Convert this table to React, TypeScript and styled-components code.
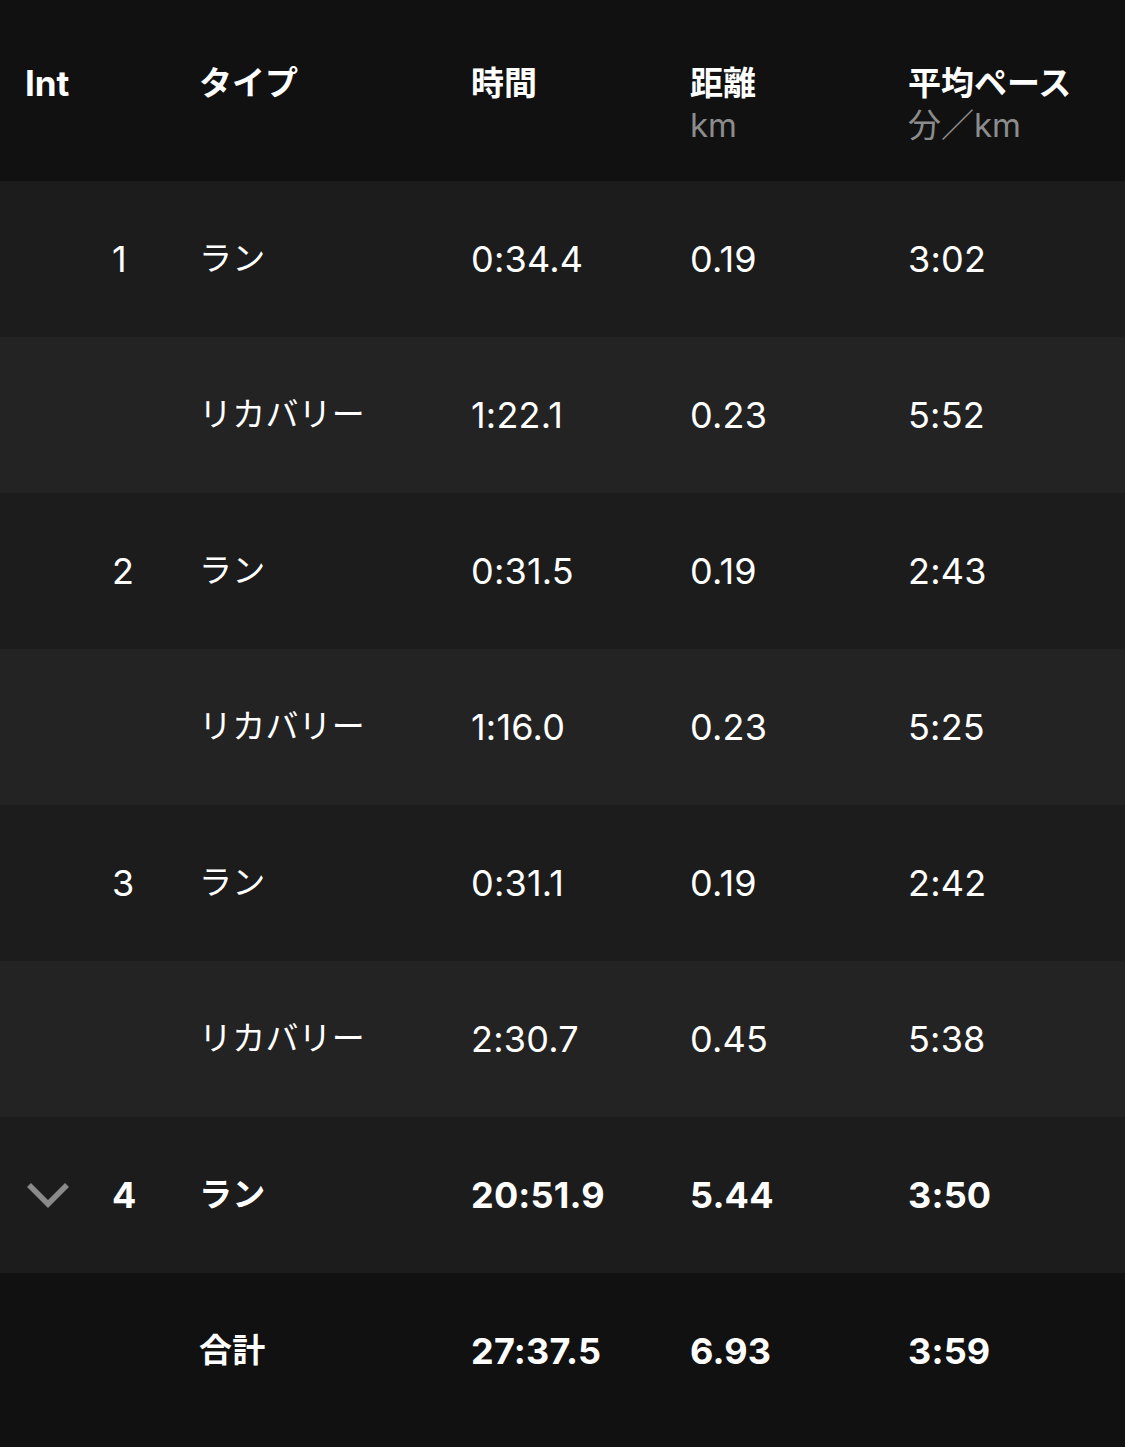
import { FC } from "react";
import styled, { createGlobalStyle } from "styled-components";

const GlobalStyle = createGlobalStyle`
    html, body {
        margin: 0;
        padding: 0;
        background: #111111;
    }
    body {
        font-family: Inter, "Noto Sans CJK JP", sans-serif;
        color: #ffffff;
    }
`;

const Table = styled.div`
    width: 1125px;
    display: flex;
    flex-direction: column;
`;

const Row = styled.div<{ $bg: string; $height: number }>`
    display: grid;
    grid-template-columns: 174px 272px 219px 218px 1fr;
    align-items: center;
    height: ${(p) => p.$height}px;
    padding-left: 25px;
    background: ${(p) => p.$bg};
`;

const HeaderRow = styled(Row)`
    align-items: start;
    padding-top: 62px;
    box-sizing: border-box;
`;

const HeadCell = styled.div`
    display: flex;
    flex-direction: column;
`;

const HeadTitle = styled.span<{ $jp?: boolean }>`
    font-size: ${(p) => (p.$jp ? 33 : 35)}px;
    font-weight: 700;
    line-height: 42px;
`;

const HeadUnit = styled.span`
    font-size: 33px;
    font-weight: 400;
    line-height: 42px;
    color: #8c8c8c;
`;

const IntCell = styled.div`
    display: flex;
    align-items: center;
    position: relative;
    padding-left: 87px;
`;

const Chevron = styled.svg`
    position: absolute;
    left: 1px;
    top: 50%;
    transform: translateY(-50%);
`;

const Cell = styled.div<{ $bold?: boolean; $jp?: boolean }>`
    font-size: ${(p) => (p.$jp ? 33 : 36)}px;
    font-weight: ${(p) => (p.$bold ? 700 : 400)};
    line-height: 44px;
    letter-spacing: 0.2px;
    white-space: nowrap;
    margin-top: ${(p) => (p.$jp ? -3 : 0)}px;
`;

type Lap = {
    int?: string;
    type: string;
    time: string;
    dist: string;
    pace: string;
    recovery?: boolean;
    bold?: boolean;
    expand?: boolean;
};

const LAPS: Lap[] = [
    { int: "1", type: "ラン", time: "0:34.4", dist: "0.19", pace: "3:02" },
    { type: "リカバリー", time: "1:22.1", dist: "0.23", pace: "5:52", recovery: true },
    { int: "2", type: "ラン", time: "0:31.5", dist: "0.19", pace: "2:43" },
    { type: "リカバリー", time: "1:16.0", dist: "0.23", pace: "5:25", recovery: true },
    { int: "3", type: "ラン", time: "0:31.1", dist: "0.19", pace: "2:42" },
    { type: "リカバリー", time: "2:30.7", dist: "0.45", pace: "5:38", recovery: true },
    { int: "4", type: "ラン", time: "20:51.9", dist: "5.44", pace: "3:50", bold: true, expand: true },
];

const ChevronDown: FC = () => (
    <Chevron width="44" height="28" viewBox="0 0 44 28">
        <path d="M3 4 L22 23 L41 4" fill="none" stroke="#8a8a8a" strokeWidth="5.5" />
    </Chevron>
);

export default function App() {
    return (
        <>
            <GlobalStyle />
            <Table>
                <HeaderRow $bg="#111111" $height={181}>
                    <HeadCell>
                        <HeadTitle>Int</HeadTitle>
                    </HeadCell>
                    <HeadCell>
                        <HeadTitle $jp>タイプ</HeadTitle>
                    </HeadCell>
                    <HeadCell>
                        <HeadTitle $jp>時間</HeadTitle>
                    </HeadCell>
                    <HeadCell>
                        <HeadTitle $jp>距離</HeadTitle>
                        <HeadUnit>km</HeadUnit>
                    </HeadCell>
                    <HeadCell>
                        <HeadTitle $jp>平均ペース</HeadTitle>
                        <HeadUnit>分／km</HeadUnit>
                    </HeadCell>
                </HeaderRow>

                {LAPS.map((lap, i) => (
                    <Row key={i} $bg={lap.recovery ? "#232323" : "#1c1c1c"} $height={156}>
                        <IntCell>
                            {lap.expand && <ChevronDown />}
                            <Cell $bold={lap.bold}>{lap.int}</Cell>
                        </IntCell>
                        <Cell $bold={lap.bold} $jp>
                            {lap.type}
                        </Cell>
                        <Cell $bold={lap.bold}>{lap.time}</Cell>
                        <Cell $bold={lap.bold}>{lap.dist}</Cell>
                        <Cell $bold={lap.bold}>{lap.pace}</Cell>
                    </Row>
                ))}

                <Row $bg="#111111" $height={156}>
                    <IntCell />
                    <Cell $bold $jp>
                        合計
                    </Cell>
                    <Cell $bold>27:37.5</Cell>
                    <Cell $bold>6.93</Cell>
                    <Cell $bold>3:59</Cell>
                </Row>
            </Table>
        </>
    );
}
